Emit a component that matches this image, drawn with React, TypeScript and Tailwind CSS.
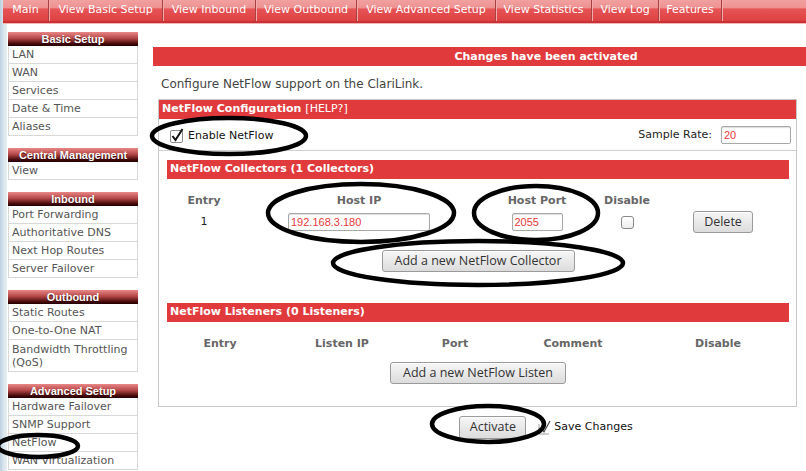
const nav: [string, number][] = [
  ["Main", 46],
  ["View Basic Setup", 114],
  ["View Inbound", 93],
  ["View Outbound", 101],
  ["View Advanced Setup", 139],
  ["View Statistics", 96],
  ["View Log", 67],
  ["Features", 63],
];

const sections: { title: string; items: string[] }[] = [
  { title: "Basic Setup", items: ["LAN", "WAN", "Services", "Date & Time", "Aliases"] },
  { title: "Central Management", items: ["View"] },
  {
    title: "Inbound",
    items: ["Port Forwarding", "Authoritative DNS", "Next Hop Routes", "Server Failover"],
  },
  {
    title: "Outbound",
    items: ["Static Routes", "One-to-One NAT", "Bandwidth Throttling (QoS)"],
  },
  {
    title: "Advanced Setup",
    items: ["Hardware Failover", "SNMP Support", "NetFlow", "WAN Virtualization"],
  },
];

const font = "font-['DejaVu_Sans',sans-serif]";
const btnFont = "font-['Open_Sans',sans-serif]";

function Button({ label, w, h = 22 }: { label: string; w: number; h?: number }) {
  return (
    <div
      className={`${btnFont} flex shrink-0 items-center justify-center rounded-[3px] border border-[#9a9a9a] bg-[linear-gradient(to_bottom,#f6f6f6,#dcdcdc)] text-[12.5px] text-[#333] shadow-[inset_0_1px_0_#fff]`}
      style={{ width: w, height: h }}
    >
      {label}
    </div>
  );
}

function Field({ value, w }: { value: string; w: number }) {
  return (
    <div
      className="flex h-[18px] shrink-0 items-center rounded-[2px] border border-[#a8a8a8] bg-white pl-[2px] font-['Liberation_Sans',Arial,sans-serif] text-[11px] text-[#e8383a] shadow-[inset_0_1px_1px_#ddd]"
      style={{ width: w }}
    >
      {value}
    </div>
  );
}

function RedBar({ children }: { children: React.ReactNode }) {
  return (
    <div className="flex h-[19px] items-center bg-[#e13a3c] pl-[3px] text-[11px] font-bold text-white">
      {children}
    </div>
  );
}

export default function App() {
  return (
    <div className={`${font} relative flex h-[471px] w-[806px] overflow-hidden bg-white`}>
      <div className="w-[3px] shrink-0 bg-[linear-gradient(to_right,#b9cfdd,#d6e3ec)]" />
      <div className="flex min-w-0 flex-1 flex-col">
        {/* top menu */}
        <div className="flex h-[21px] shrink-0 bg-[linear-gradient(to_bottom,#f1a0a0_0%,#ee9191_38%,#e65456_42%,#de4143_100%)]">
          {nav.map(([label, w]) => (
            <div
              key={label}
              className="flex shrink-0 items-center justify-center border-r border-[#a84040] text-[11px] text-white shadow-[1px_0_0_#f2aaaa]"
              style={{ width: w }}
            >
              {label}
            </div>
          ))}
        </div>
        <div className="h-[2px] shrink-0 bg-[#c83234]" />
        <div className="h-[1px] shrink-0 bg-[#f3b4b4]" />

        <div className="flex shrink-0">
          <div className="w-[4px] shrink-0 bg-[linear-gradient(to_right,#d6e3ec,#e8eff4)]" />
          {/* sidebar */}
          <div className="ml-[1px] w-[130px] shrink-0 pt-[8px]">
            {sections.map((s) => (
              <div key={s.title} className="mb-[12px]">
                <div className="h-[14px] bg-[linear-gradient(to_bottom,#e98787,#b54848_45%,#420808_85%,#230000)] text-center font-['Liberation_Sans',Arial,sans-serif] text-[11px] font-bold leading-[14px] text-white [text-shadow:0_1px_1px_#300]">
                  {s.title}
                </div>
                <div className="border-x border-[#d8d8d8]">
                  {s.items.map((it) => (
                    <div
                      key={it}
                      className={`border-b border-[#d8d8d8] pl-[3px] text-[11px] text-[#555] ${
                        it.length > 20 ? "h-[32px] py-[3px] leading-[13px]" : "h-[18px] leading-[17px]"
                      }`}
                    >
                      {it}
                    </div>
                  ))}
                </div>
              </div>
            ))}
          </div>

          {/* main */}
          <div className="ml-[15px] w-[786px] shrink-0 pt-[23px]">
            <div className="h-[19px] bg-[#e13a3c] text-center text-[11px] font-bold leading-[19px] text-white">
              Changes have been activated
            </div>
            <p className="ml-[8px] mt-[11px] text-[12px] leading-[14px] text-[#444]">
              Configure NetFlow support on the ClariLink.
            </p>

            <div className="ml-[5px] mt-[8px] w-[639px] border border-[#c8c8c8] pb-[22px]">
              <RedBar>
                NetFlow Configuration<span className="ml-[4px] font-normal">[HELP?]</span>
              </RedBar>
              <div className="flex h-[32px] items-center border-b border-[#cfcfcf] pl-[11px] pr-[5px] pt-[1px]">
                <svg width="14" height="15" viewBox="0 0 14 15" className="mt-[1px]">
                  <rect x="0.5" y="2.5" width="12" height="12" rx="1.5" fill="#fff" stroke="#8a8a8a" />
                  <path d="M2.5 8 L5.5 12 L12.5 1" fill="none" stroke="#111" strokeWidth="2" />
                </svg>
                <span className="ml-[4px] mt-[2px] text-[11px] text-[#111]">Enable NetFlow</span>
                <span className="ml-auto mr-[9px] text-[11px] text-[#222]">Sample Rate:</span>
                <Field value="20" w={70} />
              </div>

              <div className="ml-[8px] mr-[7px] mt-[9px]">
                <RedBar>NetFlow Collectors (1 Collectors)</RedBar>
                <div className="mt-[13px] grid h-[18px] grid-cols-[74px_236px_120px_60px_132px] items-center text-center text-[11px] font-bold text-[#666]">
                  <div>Entry</div>
                  <div>Host IP</div>
                  <div>Host Port</div>
                  <div>Disable</div>
                  <div />
                </div>
                <div className="grid h-[24px] grid-cols-[74px_236px_120px_60px_132px] items-center justify-items-center text-[11px] text-[#222]">
                  <div>1</div>
                  <Field value="192.168.3.180" w={142} />
                  <Field value="2055" w={51} />
                  <div className="h-[13px] w-[13px] rounded-[3px] border border-[#888] bg-[linear-gradient(to_bottom,#fff,#ececec)]" />
                  <Button label="Delete" w={60} />
                </div>
                <div className="mt-[16px] flex justify-center">
                  <Button label="Add a new NetFlow Collector" w={193} />
                </div>

                <div className="mt-[31px]">
                  <RedBar>NetFlow Listeners (0 Listeners)</RedBar>
                </div>
                <div className="mt-[14px] grid h-[16px] grid-cols-[106px_138px_88px_148px_142px] items-center text-center text-[11px] font-bold text-[#666]">
                  <div>Entry</div>
                  <div>Listen IP</div>
                  <div>Port</div>
                  <div>Comment</div>
                  <div>Disable</div>
                </div>
                <div className="mt-[10px] flex justify-center">
                  <Button label="Add a new NetFlow Listen" w={176} />
                </div>
              </div>
            </div>

            <div className="mt-[9px] flex items-center justify-center">
              <Button label="Activate" w={67} h={23} />
              <svg width="14" height="18" viewBox="0 0 14 18" className="ml-[12px] mr-[2px]">
                <path d="M1 5 V15 H11" fill="none" stroke="#9a9a9a" strokeWidth="1" />
                <path d="M3 9 L6 13 L12 2" fill="none" stroke="#444" strokeWidth="1.2" />
              </svg>
              <span className="text-[11px] text-[#111]">Save Changes</span>
            </div>
          </div>
        </div>
      </div>

      {/* hand-drawn annotation marks */}
      <svg
        className="pointer-events-none absolute left-0 top-0"
        width="806"
        height="471"
        viewBox="0 0 806 471"
      >
        <g fill="none" stroke="#000" strokeWidth="4.5">
          <ellipse cx="229" cy="136" rx="77" ry="18" />
          <ellipse cx="361" cy="213" rx="93" ry="29" />
          <ellipse cx="536" cy="213" rx="62" ry="27" />
          <ellipse cx="478" cy="263" rx="145" ry="22" />
          <ellipse cx="488" cy="424" rx="56" ry="18" />
          <ellipse cx="38" cy="446" rx="40" ry="11" />
        </g>
      </svg>
    </div>
  );
}
